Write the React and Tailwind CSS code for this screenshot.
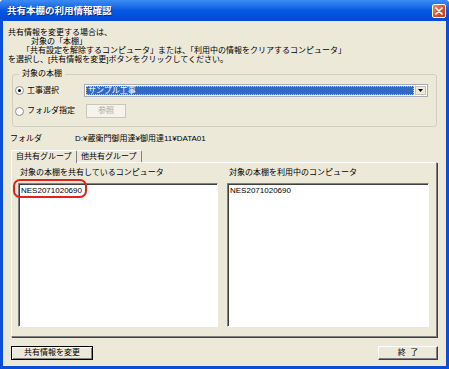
function Radio({ checked }) {
  return (
    <span className="w-[9px] h-[9px] shrink-0 rounded-full border border-[#8E8F8F] bg-white flex items-center justify-center">
      {checked && <span className="w-[3px] h-[3px] rounded-full bg-black" />}
    </span>
  );
}

function CloseButton() {
  return (
    <div className="w-[14px] h-[14px] rounded-[2px] border border-white bg-gradient-to-br from-[#F0906C] via-[#DC5530] to-[#C33E14] flex items-center justify-center">
      <svg width="8" height="8" viewBox="0 0 8 8">
        <path d="M1 1L7 7M7 1L1 7" stroke="white" strokeWidth="1.7" strokeLinecap="round" />
      </svg>
    </div>
  );
}

export default function App() {
  return (
    <div className="w-[449px] h-[369px] flex flex-col bg-[#0A4ED8] rounded-t-[4px] text-[8px] text-black font-['Liberation_Sans','Noto_Sans_CJK_JP',sans-serif]">
      {/* title bar */}
      <div className="h-[21px] shrink-0 flex items-center justify-between pl-[7px] pr-[3px] rounded-t-[4px] bg-gradient-to-b from-[#3C8CF4] via-[#0558E2] to-[#0349D4]">
        <span className="text-white font-bold text-[9.5px] leading-none [text-shadow:1px_1px_0_#0B2A80]">共有本棚の利用情報確認</span>
        <CloseButton />
      </div>

      <div className="flex-1 mx-[3px] mb-[3px] bg-[#ECE9D8] flex flex-col pt-[7px]">
        {/* description */}
        <div className="leading-[9px] pl-[5px]">
          <p>共有情報を変更する場合は、</p>
          <p className="pl-[23px]">対象の「本棚」</p>
          <p className="pl-[14px]">「共有設定を解除するコンピュータ」または、「利用中の情報をクリアするコンピュータ」</p>
          <p>を選択し、[共有情報を変更]ボタンをクリックしてください。</p>
        </div>

        {/* target group */}
        <fieldset className="mt-[5px] mx-[9px] border border-[#D0D0BF] rounded-[3px] pb-[8px]">
          <legend className="ml-[6px] px-[3px] leading-[10px]">対象の本棚</legend>
          <div className="mt-[5px] flex items-center h-[13px] pl-[2px] pr-[8px]">
            <Radio checked />
            <span className="ml-[3px] w-[57px] leading-[10px]">工事選択</span>
            <div className="flex-1 h-[13px] border border-[#A5ACB5] bg-white flex p-[1px]">
              <div className="flex-1 bg-[#316AC5] text-white leading-[9px] px-[2px] outline outline-1 outline-dotted outline-[#C0C0C0] -outline-offset-1">サンプル工事</div>
              <div className="w-[11px] ml-[1px] bg-[#ECE9D8] border border-[#C5C2B2] flex items-center justify-center">
                <svg width="5" height="3" viewBox="0 0 5 3"><path d="M0 0H5L2.5 3Z" fill="#000" /></svg>
              </div>
            </div>
          </div>
          <div className="mt-[7px] flex items-center h-[14px] pl-[2px]">
            <Radio />
            <span className="ml-[3px] w-[59px] leading-[10px]">フォルダ指定</span>
            <button className="w-[40px] h-[14px] border border-[#C9C7BA] bg-[#F4F3EE] text-[#ACA899] leading-none">参照</button>
          </div>
        </fieldset>

        {/* folder */}
        <div className="mt-[7px] flex leading-[10px] pl-[7px]">
          <span className="w-[65px]">フォルダ</span>
          <span>D:¥蔵衛門御用達¥御用達11¥DATA01</span>
        </div>

        {/* tabs */}
        <div className="mt-[6px] ml-[8px] mr-[9px] flex flex-col">
          <div className="flex items-end h-[12px]">
            <div className="relative z-10 w-[66px] h-[13px] -mb-[1px] bg-[#ECE9D8] border-l border-t border-white border-r border-r-[#808080] rounded-t-[2px] pl-[4px] leading-[11px]">自共有グループ</div>
            <div className="w-[65px] h-[12px] border-t border-white border-r border-r-[#808080] rounded-t-[2px] pl-[4px] leading-[11px]">他共有グループ</div>
          </div>
          <div className="h-[175px] border-l border-t border-white border-r border-b border-r-[#808080] border-b-[#808080] shadow-[1px_1px_0_#404040] flex gap-[9px] pt-[5px] pl-[6px] pr-[7px] pb-[9px]">
            <div className="relative w-[200px] flex flex-col">
              <div className="leading-[10px] pl-[2px]">対象の本棚を共有しているコンピュータ</div>
              <div className="mt-[5px] flex-1 bg-white border border-t-[#808080] border-l-[#808080] border-r-white border-b-white shadow-[inset_1px_1px_0_#404040] pl-[2px] pt-[2px] leading-[9px]">
                NES2071020690
              </div>
              <div className="absolute left-[-5px] top-[11px] w-[74px] h-[19px] border-2 border-[#E3231B] rounded-[7px]" />
            </div>
            <div className="flex-1 flex flex-col">
              <div className="leading-[10px] pl-[2px]">対象の本棚を利用中のコンピュータ</div>
              <div className="mt-[5px] flex-1 bg-white border border-t-[#808080] border-l-[#808080] border-r-white border-b-white shadow-[inset_1px_1px_0_#404040] pl-[2px] pt-[2px] leading-[9px]">
                NES2071020690
              </div>
            </div>
          </div>
        </div>

        {/* buttons */}
        <div className="mt-[9px] flex justify-between px-[8px]">
          <button className="w-[82px] h-[14px] border border-black bg-[#ECE9D8] shadow-[inset_1px_1px_0_#fff,inset_-1px_-1px_0_#808080] leading-none">共有情報を変更</button>
          <button className="w-[60px] h-[14px] border border-t-white border-l-white border-r-[#404040] border-b-[#404040] bg-[#ECE9D8] shadow-[inset_-1px_-1px_0_#808080] leading-none whitespace-pre">終  了</button>
        </div>
      </div>
    </div>
  );
}
